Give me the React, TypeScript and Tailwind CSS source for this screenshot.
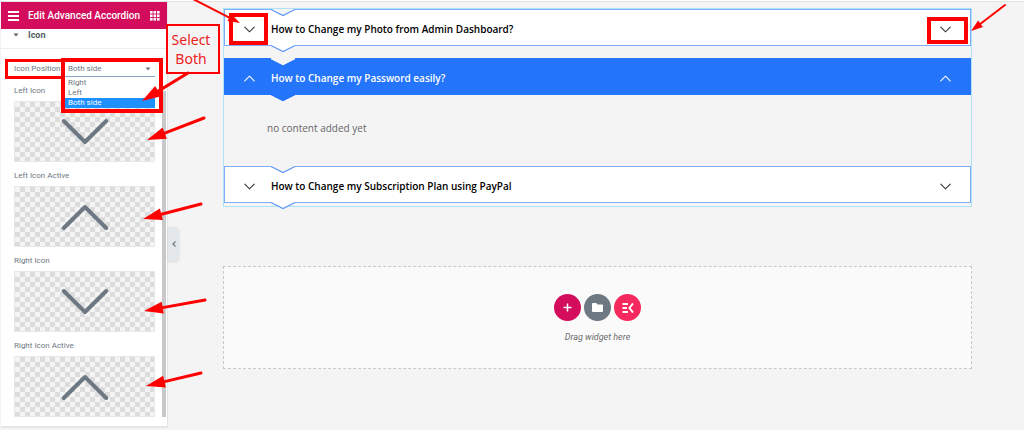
import { useState } from "react";

type IconProps = { className?: string; up?: boolean };

function BigChevron({ up }: IconProps) {
  return (
    <svg width="48" height="28" viewBox="0 0 48 28" fill="none" stroke="#6d7882" strokeWidth="4" strokeLinecap="round" aria-hidden="true">
      <path d={up ? "M2.800 25 L24 4 L45.200 25" : "M2.800 3 L24 24 L45.200 3"} strokeLinejoin="round" />
    </svg>
  );
}

function SmallChevron({ up, className }: IconProps) {
  return (
    <svg className={className} width="11" height="7" viewBox="0 0 11 7" fill="none" stroke="currentColor" strokeWidth="1.1" strokeLinecap="round" aria-hidden="true">
      <path d={up ? "M0.800 5.800 L5.500 1.200 L10.200 5.800" : "M0.800 1.200 L5.500 5.800 L10.200 1.200"} />
    </svg>
  );
}

function Notch({ fill, stroke, className }: { fill: string; stroke: string; className: string }) {
  return (
    <svg className={className} width="24" height="8" viewBox="0 0 24 8" aria-hidden="true">
      <path d="M0 0 H24 V1 L12 7 L0 1 Z" fill={fill} />
      <path d="M0 0.500 L1 1 L12 6.500 L23 1 L24 0.500" fill="none" stroke={stroke} strokeWidth="1.200" />
    </svg>
  );
}

function Arrow({ from, to, small }: { from: [number, number]; to: [number, number]; small?: boolean }) {
  const dx = to[0] - from[0];
  const dy = to[1] - from[1];
  const length = Math.hypot(dx, dy);
  const ux = dx / length;
  const uy = dy / length;
  const head = small ? 12 : 19;
  const half = small ? 4 : 6;
  const bx = to[0] - ux * head;
  const by = to[1] - uy * head;
  return (
    <g fill="#ff0000" stroke="#ff0000">
      <line x1={from[0]} y1={from[1]} x2={bx} y2={by} strokeWidth={small ? 2 : 3} strokeLinecap="round" />
      <path stroke="none" d={`M${to[0]} ${to[1]} L${bx - uy * half} ${by + ux * half} L${bx + uy * half} ${by - ux * half} Z`} />
    </g>
  );
}

function IconField({ label, up }: { label: string; up?: boolean }) {
  return (
    <div className="flex flex-col gap-[3px]">
      <span className="text-[8px] leading-[14px]">{label}</span>
      <button
        type="button"
        aria-label={label}
        className="flex h-[61px] w-full items-center justify-center border border-[#e8e8e8] bg-[conic-gradient(#dcdcdc_25%,#f4f4f4_0_50%,#dcdcdc_0_75%,#f4f4f4_0)] bg-[length:10px_10px]"
      >
        <BigChevron up={up} />
      </button>
    </div>
  );
}

const positions = ["Right", "Left", "Both side"];

function Panel() {
  const [position, setPosition] = useState("Both side");
  return (
    <aside className="ml-px flex w-[167px] shrink-0 flex-col border-r border-b-2 border-[#e3e5e8] bg-white pb-[9px] text-[#6d7882]">
      <header className="flex h-[27px] items-center bg-[#d30c5c] px-[7px] text-white">
        <button type="button" aria-label="Menu" className="flex w-[11px] flex-col gap-[2px]">
          <span className="h-[2px] w-full bg-white" />
          <span className="h-[2px] w-full bg-white" />
          <span className="h-[2px] w-full bg-white" />
        </button>
        <h1 className="ml-[9px] flex-1 text-[10px] font-medium whitespace-nowrap">Edit Advanced Accordion</h1>
        <button type="button" aria-label="Widgets">
          <svg width="10" height="10" viewBox="0 0 10 10" fill="white" aria-hidden="true">
            {[0, 3.5, 7].map((y) => [0, 3.5, 7].map((x) => <rect key={`${x}-${y}`} x={x} y={y} width="2.600" height="2.600" />))}
          </svg>
        </button>
      </header>
      <button type="button" className="flex h-5 items-start gap-[9px] border-b border-[#ebecee] pl-3 text-[9px] leading-3 font-bold text-[#556068]">
        <svg className="mt-1" width="6" height="4" viewBox="0 0 6 4" aria-hidden="true">
          <path d="M0.500 0.500 H5.500 L3 3.500 Z" fill="currentColor" />
        </svg>
        Icon
      </button>
      <div className="flex flex-col gap-[7px] pr-3 pl-[13px]">
        <div className="mt-3 flex h-4 items-center">
          <label htmlFor="icon-position" className="w-[51px] shrink-0 text-[8px] whitespace-nowrap">
            Icon Position
          </label>
          <div className="relative flex-1">
            <select
              id="icon-position"
              value={position}
              onChange={(e) => setPosition(e.target.value)}
              className="block h-4 w-full appearance-none border-b border-[#86a4cc] bg-white pl-[3px] text-[8px] outline-none"
            >
              {positions.map((p) => (
                <option key={p}>{p}</option>
              ))}
            </select>
            <svg className="pointer-events-none absolute top-[6px] right-1" width="6" height="4" viewBox="0 0 6 4" aria-hidden="true">
              <path d="M0.500 0.500 H5.500 L3 3.500 Z" fill="currentColor" />
            </svg>
            <ul role="listbox" aria-label="Icon Position" className="absolute inset-x-0 top-4 bg-white pt-px text-[8px] leading-[10px]">
              {positions.map((p) => (
                <li
                  key={p}
                  role="option"
                  aria-selected={p === position}
                  onClick={() => setPosition(p)}
                  className={p === position ? "bg-[#1e90ff] pl-[3px] text-white" : "pl-[3px]"}
                >
                  {p}
                </li>
              ))}
            </ul>
          </div>
        </div>
        <IconField label="Left Icon" />
        <IconField label="Left Icon Active" up />
        <IconField label="Right Icon" />
        <IconField label="Right Icon Active" up />
      </div>
    </aside>
  );
}

function AccordionItem({ title, open }: { title: string; open?: boolean }) {
  return (
    <h2 className="relative">
      <button
        type="button"
        aria-expanded={!!open}
        className={
          open
            ? "flex h-[37px] w-full items-center border border-[#2575fc] bg-[#2575fc] px-[19px] pt-[3px] text-white"
            : "flex h-[37px] w-full items-center border border-[#7fadfb] bg-white px-[19px] pt-[3px] text-black"
        }
      >
        <SmallChevron up={open} className={open ? "text-white" : "text-[#333333]"} />
        <span className="ml-4 flex-1 text-left text-[10px] font-semibold whitespace-nowrap">{title}</span>
        <SmallChevron up={open} className={open ? "text-white" : "text-[#333333]"} />
      </button>
      <Notch className="absolute top-0 left-[47px]" fill="#f4f4f4" stroke={open ? "#f4f4f4" : "#5c97fa"} />
      <Notch className="absolute top-9 left-[47px]" fill={open ? "#2575fc" : "#ffffff"} stroke={open ? "#2575fc" : "#5c97fa"} />
    </h2>
  );
}

function Canvas() {
  return (
    <main className="flex min-w-0 flex-1 flex-col pr-[52px] pl-[55px] font-['Open_Sans','Noto_Sans',sans-serif]">
      <section className="mt-[6px] border border-[#aee3f7] pb-[3px]">
        <AccordionItem title="How to Change my Photo from Admin Dashboard?" />
        <div className="h-3" />
        <AccordionItem title="How to Change my Password easily?" open />
        <p className="flex h-[71px] items-center pb-1 pl-[43px] text-[10px] text-[#666666]">no content added yet</p>
        <AccordionItem title="How to Change my Subscription Plan using PayPal" />
      </section>
      <section className="mt-[59px] flex h-[103px] flex-col items-center border border-dashed border-[#c3c9cf] bg-[#fafafa] pt-[27px] font-[Roboto,sans-serif]">
        <div className="flex gap-[3px]">
          <button type="button" aria-label="Add section" className="flex size-[27px] items-center justify-center rounded-full bg-[#d30c5c]">
            <svg width="9" height="9" viewBox="0 0 9 9" stroke="white" strokeWidth="1.500" aria-hidden="true">
              <path d="M4.500 0.500 V8.500 M0.500 4.500 H8.500" />
            </svg>
          </button>
          <button type="button" aria-label="Add template" className="flex size-[27px] items-center justify-center rounded-full bg-[#6d7882]">
            <svg width="11" height="9" viewBox="0 0 11 9" fill="white" aria-hidden="true">
              <path d="M1 0 H4.200 L5.500 1.400 H10 Q11 1.400 11 2.400 V8 Q11 9 10 9 H1 Q0 9 0 8 V1 Q0 0 1 0 Z" />
            </svg>
          </button>
          <button type="button" aria-label="Add kit" className="flex size-[27px] items-center justify-center rounded-full bg-[#f5295d]">
            <svg width="12" height="10" viewBox="0 0 12 10" fill="none" stroke="white" strokeWidth="2" aria-hidden="true">
              <path d="M0.500 1 H6 M0.500 5 H5 M0.500 9 H6 M11 0.500 L7.500 5 L11 9.500" />
            </svg>
          </button>
        </div>
        <p className="mt-[9px] text-[9px] leading-[14px] text-[#6d6d6d] italic">Drag widget here</p>
      </section>
    </main>
  );
}

function Annotations() {
  return (
    <div className="pointer-events-none absolute inset-0 overflow-hidden">
      <div className="absolute top-[59px] left-[5px] h-5 w-[60px] border-[3px] border-[#ff0000]" />
      <div className="absolute top-[58px] left-[61px] h-[55px] w-[102px] border-4 border-[#ff0000]" />
      <div className="absolute top-[24px] left-[166px] flex h-[50px] w-[54px] items-center justify-center border-2 border-[#ff0000] bg-[#f4f4f4] pr-1 text-center font-['Noto_Sans',sans-serif] text-[14px] leading-[19px] text-[#ee2222]">
        <span>
          Select
          <br />
          Both
        </span>
      </div>
      <div className="absolute top-[13px] left-[229px] h-8 w-[39px] border-4 border-[#ff0000]" />
      <div className="absolute top-[17px] right-[56px] h-[27px] w-[41px] border-4 border-[#ff0000]" />
      <svg className="absolute top-0 left-0" width="260" height="420" viewBox="0 0 260 420" aria-hidden="true">
        <Arrow from={[188, 73]} to={[142, 101]} />
        <Arrow from={[204, 118]} to={[147, 140]} />
        <Arrow from={[201, 204]} to={[143, 219]} />
        <Arrow from={[205, 300]} to={[144, 311]} />
        <Arrow from={[201, 373]} to={[146, 386]} />
        <Arrow from={[193, -1]} to={[240, 23]} small />
      </svg>
      <svg className="absolute top-0 right-0" width="60" height="40" viewBox="0 0 60 40" aria-hidden="true">
        <Arrow from={[41, 5]} to={[7, 31]} small />
      </svg>
    </div>
  );
}

export default function App() {
  return (
    <div className="relative min-h-screen overflow-hidden bg-[#f4f4f4] font-[Roboto,sans-serif]">
      <div className="h-[2px] border-b border-[#e2e2e2] bg-white" />
      <div className="flex items-start">
        <div className="relative flex">
          <Panel />
          <div className="absolute top-[89px] right-[2px] bottom-[11px] w-1 bg-[#c9c9c9]" />
          <button
            type="button"
            aria-label="Collapse panel"
            className="absolute top-[225px] left-full flex h-[34px] w-[11px] items-center justify-center rounded-r-sm bg-[#e4e8eb] text-[#6d7882] shadow-sm"
          >
            <svg width="4" height="6" viewBox="0 0 4 6" fill="none" stroke="currentColor" strokeWidth="1.200" aria-hidden="true">
              <path d="M3.500 0.500 L1 3 L3.500 5.500" />
            </svg>
          </button>
        </div>
        <Canvas />
      </div>
      <Annotations />
    </div>
  );
}
